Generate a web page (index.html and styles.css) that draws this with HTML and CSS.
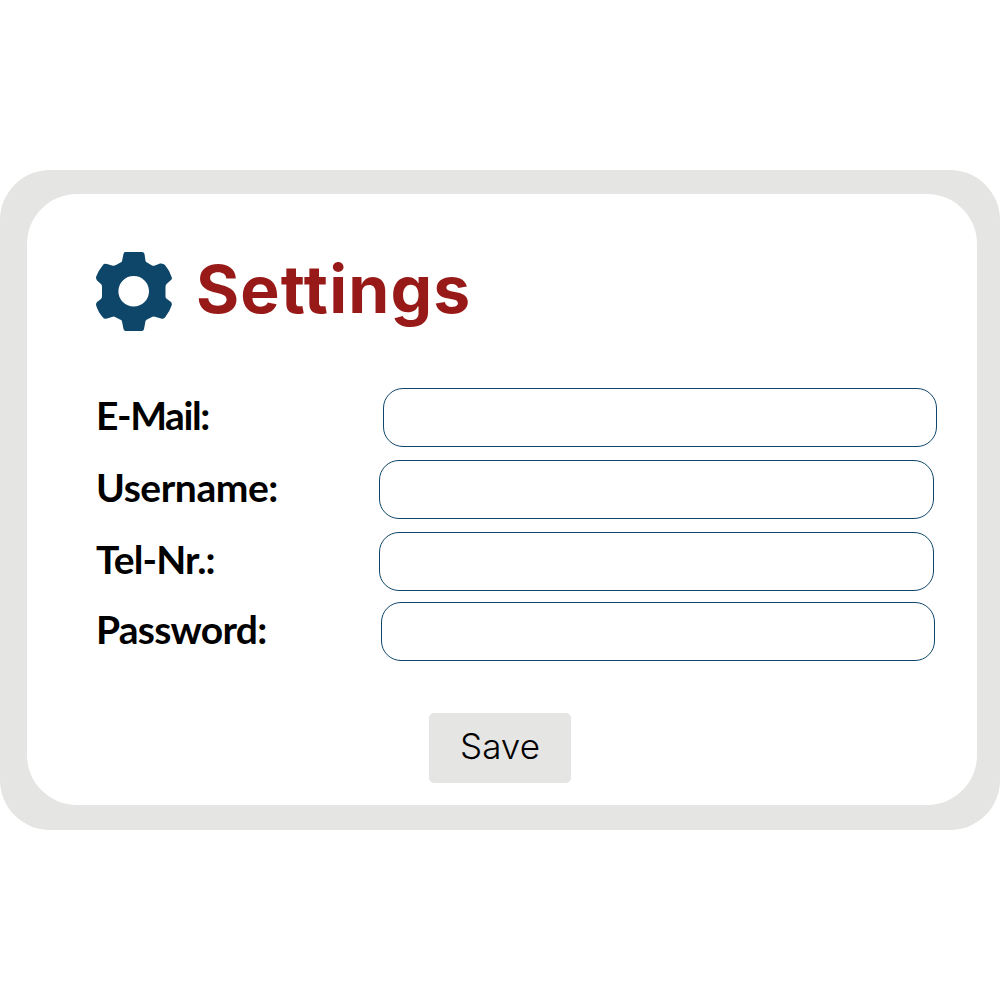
FILE: index.html
```
<!DOCTYPE html>
<html lang="en">
<head>
<meta charset="utf-8">
<title>Settings</title>
<link rel="stylesheet" href="styles.css">
</head>
<body>
<main class="frame">
  <form class="panel">
    <header class="header">
      <svg class="gear" viewBox="0 0 76 80" aria-hidden="true">
        <path fill-rule="evenodd" d="M29 0H46Q48 0 48.500 2L49.500 9Q50 10 51 10.500L56 13.500Q57 14 59 13.500L64 11.500Q67 11 69 13Q74 19 76 26Q76 27 75 28L70.500 32Q69.500 33 69.500 35V44.500Q69.500 46 71 47L75 50Q76 51 75.800 53Q74 59 69 65.500Q67 67.500 65 66.500L59 64.700Q57 64 56 65L51 67.500Q50 68 49.500 69L48 77Q47.500 79 46 79H29.500Q28 79 27.500 77L26 69.500Q26 68 24 67.500L19 65Q18 64 16 65L11 66.500Q8 67.500 7 65.500Q2 60 0 53Q0 51 1 50L5 47Q6 46 6 44V35Q6 33 5 32L1 28.500Q0 27 0 25Q2 19 7 13Q8 11 11 12L17 13.700Q18 14 20 13L24.500 10.500Q26 10 26 9L27.500 2Q28 0 29 0ZM37.700 24A15.300 15.300 0 1 0 37.700 54.600A15.300 15.300 0 1 0 37.700 24Z"/>
      </svg>
      <h1 class="title">Settings</h1>
    </header>
    <div class="row">
      <label class="label label-email" for="email">E-Mail:</label>
      <input class="field field-email" id="email" type="email">
    </div>
    <div class="row">
      <label class="label label-username" for="username">Username:</label>
      <input class="field" id="username" type="text">
    </div>
    <div class="row">
      <label class="label label-phone" for="phone">Tel-Nr.:</label>
      <input class="field" id="phone" type="tel">
    </div>
    <div class="row row-last">
      <label class="label label-password" for="password">Password:</label>
      <input class="field field-password" id="password" type="password">
    </div>
    <button class="save" type="button">Save</button>
  </form>
</main>
</body>
</html>
```
FILE: styles.css
```
* { box-sizing: border-box; }
body {
  margin: 0;
  height: 1000px;
  padding-top: 170px;
  background: #fff;
  font-family: Lato, "Open Sans", sans-serif;
}
.frame {
  height: 660px;
  padding: 24px 23px 25px 27px;
  border-radius: 50px;
  background: #e5e5e3;
}
.panel {
  display: flex;
  flex-direction: column;
  height: 611px;
  padding: 53px 0 0 69px;
  border-radius: 50px;
  background: #fff;
}
.header {
  display: flex;
  gap: 24px;
  height: 141px;
}
.gear {
  width: 76px;
  height: 80px;
  margin-top: 5px;
  fill: #0e4669;
}
.title {
  margin: 2px 0 0;
  color: #981a18;
  font-family: Inter, Lato, sans-serif;
  font-size: 66px;
  font-weight: 650;
  line-height: 80px;
  letter-spacing: 1.15px;
}
.row {
  display: flex;
  height: 59px;
  margin-bottom: 13px;
}
.row:nth-of-type(3) { margin-bottom: 11px; }
.row-last { margin-bottom: 52px; }
.label {
  width: 283px;
  color: #000;
  font-size: 39px;
  font-weight: 700;
  line-height: 54px;
  white-space: nowrap;
}
.label-email { letter-spacing: -1.4px; }
.label-username { letter-spacing: -.45px; }
.label-phone { letter-spacing: -.9px; }
.label-password { letter-spacing: -.75px; }
.field {
  width: 555px;
  height: 59px;
  padding: 0 18px;
  border: 1px solid #0e4669;
  border-radius: 20px;
  background: #fff;
  font: inherit;
  font-size: 30px;
}
.field-email { margin-left: 4px; width: 554px; }
.field-password { margin-left: 2px; width: 554px; }
.save {
  width: 142px;
  height: 70px;
  margin-left: 333px;
  padding: 0 0 4px;
  border: 0;
  border-radius: 5px;
  background: #e5e5e3;
  color: #000;
  font-family: Inter, Lato, sans-serif;
  font-size: 35px;
  font-weight: 300;
  line-height: 66px;
}
```
